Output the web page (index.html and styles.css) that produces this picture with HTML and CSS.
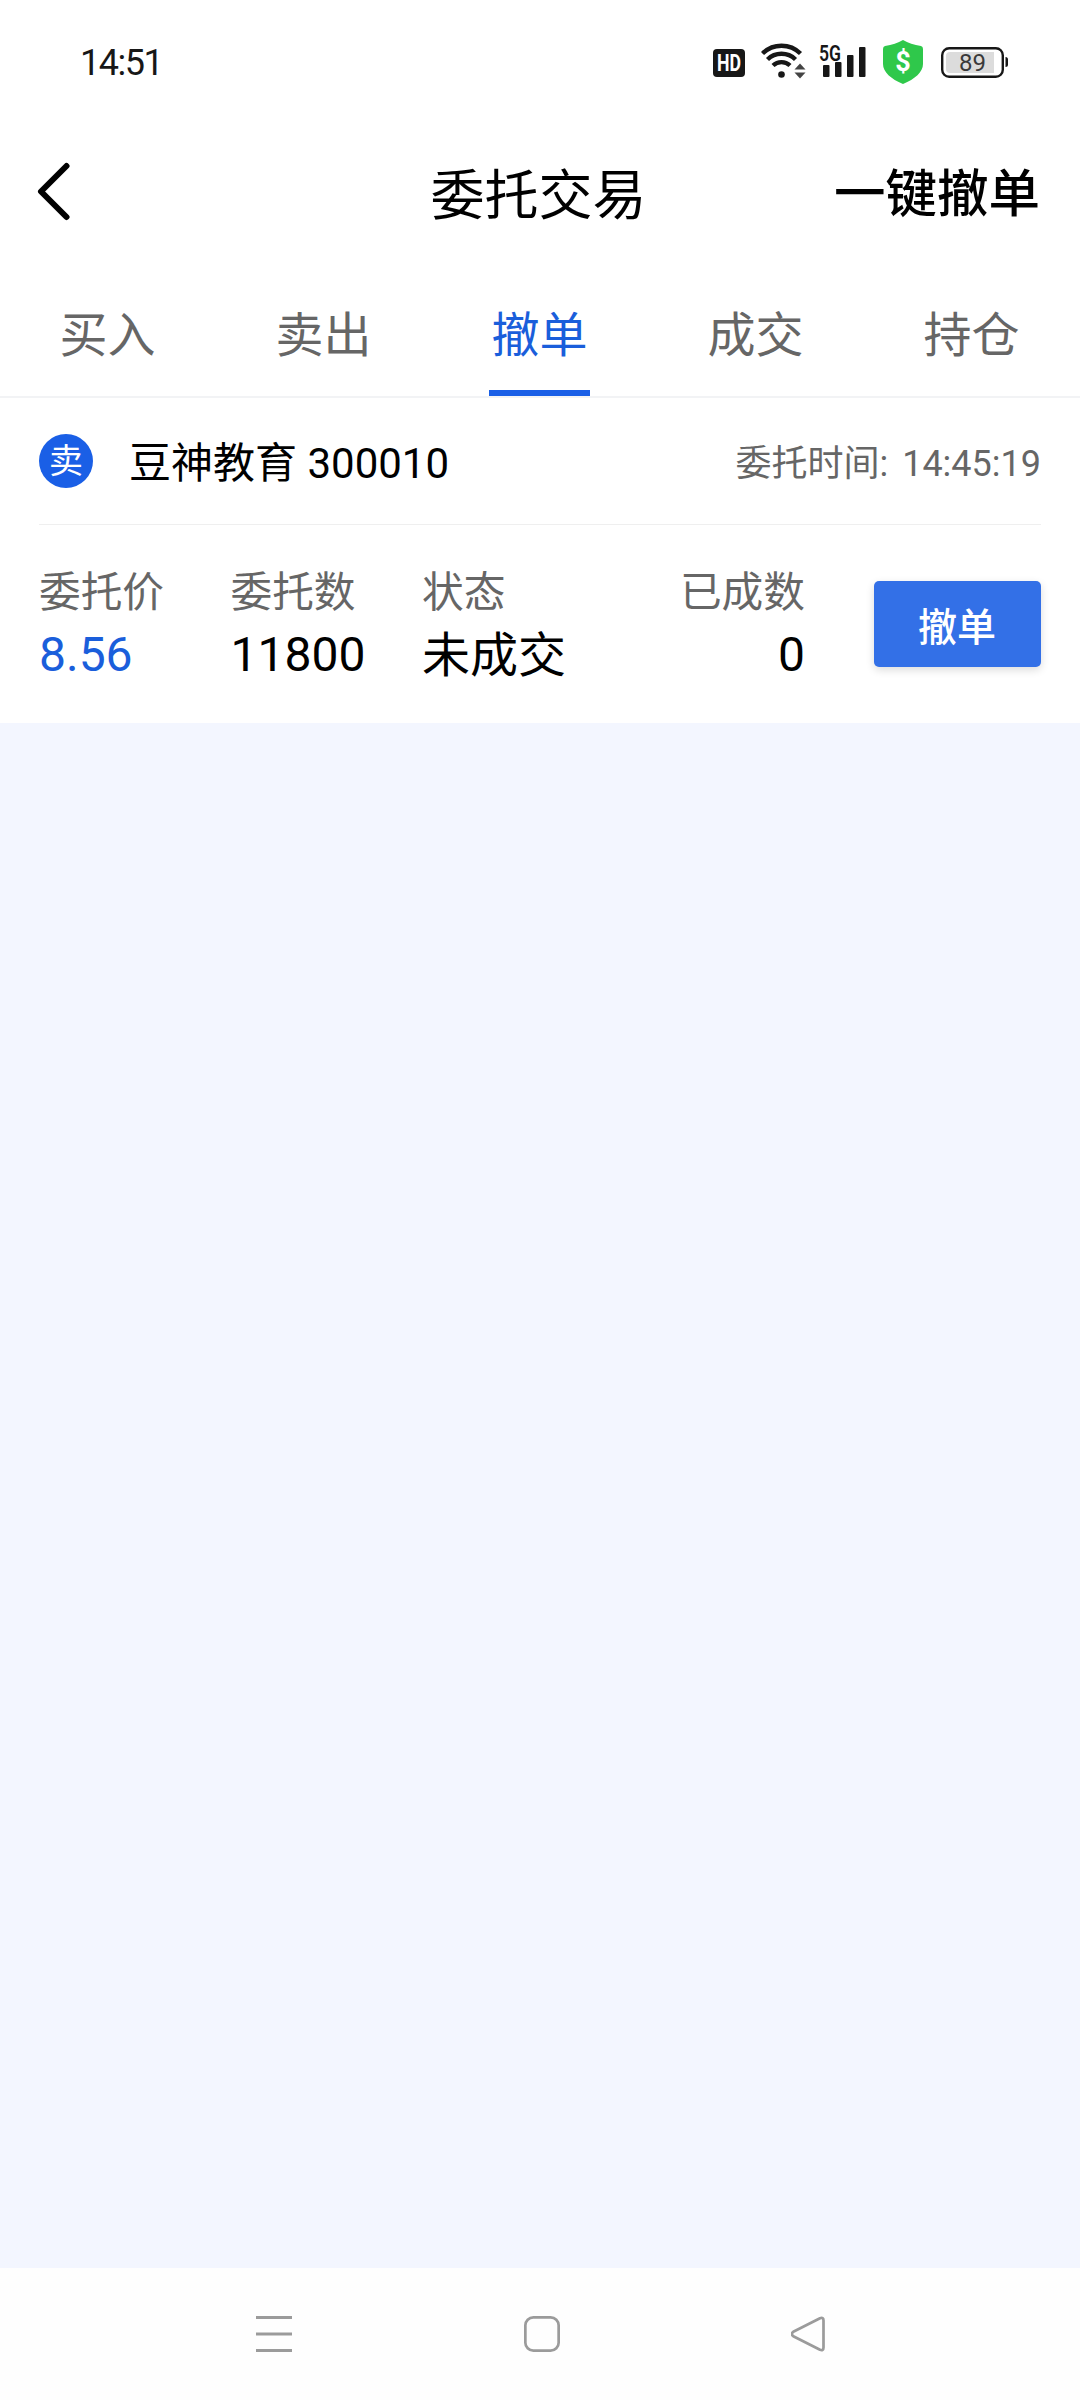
FILE: index.html
```html
<!DOCTYPE html>
<html lang="zh-CN">

<head>
    <meta charset="UTF-8">
    <meta name="viewport" content="width=device-width, initial-scale=1.0">
    <title>委托交易</title>
    <link rel="stylesheet" href="styles.css">
</head>

<body>
    <div class="status-bar">
        <span class="clock">14:51</span>
        <div class="status-icons">
            <svg class="icon-hd" width="42" height="48" viewBox="0 0 42 48">
                <rect x="0" y="11" width="32" height="28" rx="4" fill="#171717" />
                <text x="4" y="33" textLength="24" lengthAdjust="spacingAndGlyphs" font-size="23" font-weight="700" fill="#fff">HD</text>
            </svg>
            <svg class="icon-wifi" width="45" height="48" viewBox="0 0 45 48">
                <g fill="none" stroke="#171717" stroke-width="4.4">
                    <path d="M1.5 15.5a27 27 0 0 1 38 0" />
                    <path d="M6.5 21.5a20 20 0 0 1 28 0" />
                    <path d="M12 27.5a12.5 12.5 0 0 1 17 0" />
                </g>
                <circle cx="20.5" cy="36.5" r="3.3" fill="#171717" />
                <path d="M33.5 31.5l5.5-6 5.5 6z" fill="#444" />
                <path d="M33.5 34.5l5.5 6 5.5-6z" fill="#444" />
            </svg>
            <svg class="icon-signal" width="47" height="48" viewBox="0 0 47 48" fill="#171717">
                <text x="0" y="22.5" textLength="22" lengthAdjust="spacingAndGlyphs" font-size="22" font-weight="600">5G</text>
                <rect x="4" y="27" width="6.5" height="12" rx="1" />
                <rect x="16" y="24" width="6.5" height="15" rx="1" />
                <rect x="28" y="17" width="6.5" height="22" rx="1" />
                <rect x="40" y="9" width="6.5" height="30" rx="1" />
            </svg>
            <svg class="icon-shield" width="40" height="48" viewBox="0 0 40 48">
                <path d="M20 2c5 3 11 5 18 6q2 .5 2 3v15c0 8-8 15-20 20C8 41 0 34 0 26V11q0-2.5 2-3c7-1 13-3 18-6z" fill="#2fc84b" />
                <text x="20" y="33" text-anchor="middle" font-size="27" font-weight="700" fill="#fff">$</text>
            </svg>
            <svg class="icon-battery" width="68" height="48" viewBox="0 0 68 48">
                <rect x="1.2" y="10.2" width="60.6" height="28.6" rx="7" fill="#fff" stroke="#171717" stroke-width="2.4" />
                <path d="M53 14H9a4 4 0 0 0-4 4v13a4 4 0 0 0 4 4h44z" fill="#dcdcdc" />
                <path d="M64.5 19a2.5 2.5 0 0 1 2.5 2.500v5a2.500 2.500 0 0 1-2.5 2.500z" fill="#171717" />
                <text x="31.5" y="33" text-anchor="middle" font-size="24" fill="#3a3a3a">89</text>
            </svg>
        </div>
    </div>

    <div class="header">
        <svg class="back" width="34" height="60" viewBox="0 0 34 60">
            <path d="M29.5 4L4 29.5L29.5 55" fill="none" stroke="#000" stroke-width="6" stroke-linecap="round" stroke-linejoin="round" />
        </svg>
        <h1 class="title">委托交易</h1>
        <span class="cancel-all">一键撤单</span>
    </div>

    <ul class="tabs">
        <li class="tab">买入</li>
        <li class="tab">卖出</li>
        <li class="tab active">撤单</li>
        <li class="tab">成交</li>
        <li class="tab">持仓</li>
    </ul>

    <div class="order">
        <div class="order-head">
            <span class="side">卖</span>
            <span class="stock">豆神教育 300010</span>
            <span class="time">委托时间:<span class="time-value">14:45:19</span></span>
        </div>
        <div class="order-body">
            <div class="field">
                <div class="label">委托价</div>
                <div class="value price">8.56</div>
            </div>
            <div class="field">
                <div class="label">委托数</div>
                <div class="value">11800</div>
            </div>
            <div class="field">
                <div class="label">状态</div>
                <div class="value state">未成交</div>
            </div>
            <div class="field right">
                <div class="label">已成数</div>
                <div class="value">0</div>
            </div>
            <button class="cancel">撤单</button>
        </div>
    </div>

    <div class="content"></div>

    <div class="nav-bar">
        <svg width="36" height="36" viewBox="0 0 36 36" fill="none" stroke="#9b9b9b" stroke-width="3">
            <path d="M0 1.5h36M0 18h36M0 34.5h36" />
        </svg>
        <svg width="36" height="36" viewBox="0 0 36 36" fill="none" stroke="#9b9b9b" stroke-width="2.7">
            <rect x="1.35" y="1.35" width="33.3" height="33.3" rx="8" />
        </svg>
        <svg width="36" height="36" viewBox="0 0 36 36" fill="none" stroke="#9b9b9b" stroke-width="2.7" stroke-linejoin="round">
            <path d="M29 2.2L2.3 15.8Q-.5 18 2.3 20.2L29 33.8Q32.5 35 32.5 31.5V4.5Q32.5 1 29 2.2z" />
        </svg>
    </div>
</body>

</html>
```

FILE: styles.css
```css
* {
    box-sizing: border-box;
}

body {
    margin: 0;
    height: 2400px;
    display: flex;
    flex-direction: column;
    background: #fff;
    color: #000;
    font-family: Roboto, "Noto Sans CJK SC", sans-serif;
}

.status-bar {
    height: 124px;
    padding: 0 71px 0 80px;
    display: flex;
    justify-content: space-between;
    align-items: center;
}

.clock {
    padding-top: 2px;
    font-size: 36px;
    letter-spacing: -1.5px;
    color: #171717;
}

.status-icons {
    display: flex;
}

.icon-wifi {
    margin-left: 6px;
}

.icon-signal {
    margin-left: 13px;
}

.icon-shield {
    margin-left: 17px;
}

.icon-battery {
    margin-left: 18px;
}

.header {
    height: 136px;
    padding: 0 40px 0 37px;
    display: grid;
    grid-template-columns: 1fr auto 1fr;
    align-items: center;
}

.title {
    margin: 0;
    padding-top: 9px;
    font-size: 54px;
    font-weight: 400;
    line-height: 80px;
}

.cancel-all {
    justify-self: end;
    padding-top: 6px;
    font-size: 51.5px;
    font-weight: 500;
    line-height: 76px;
}

.tabs {
    height: 138px;
    margin: 0;
    padding: 0;
    display: flex;
    list-style: none;
    border-bottom: 2px solid #f2f3f5;
}

.tab {
    flex: 1;
    display: flex;
    flex-direction: column;
    align-items: center;
    justify-content: space-between;
    padding: 41px 1px 0 0;
    font-size: 48px;
    line-height: 70px;
    color: #666;
}

.tab.active {
    color: #1a5edb;
}

.tab.active::after {
    content: "";
    width: 101px;
    height: 6px;
    background: #1a5fe6;
}

.order {
    height: 325px;
    padding: 0 39px;
}

.order-head {
    height: 127px;
    display: flex;
    align-items: center;
    border-bottom: 1px solid #efefef;
}

.side {
    width: 54px;
    height: 54px;
    border-radius: 50%;
    background: #1a5fe6;
    color: #fff;
    font-size: 34px;
    line-height: 54px;
    text-align: center;
}

.stock {
    margin-left: 36px;
    padding-bottom: 4px;
    font-size: 42px;
}

.time {
    margin-left: auto;
    padding-bottom: 2px;
    font-size: 36px;
    color: #666;
}

.time-value {
    margin-left: 14px;
}

.order-body {
    display: flex;
    padding-top: 38px;
}

.field {
    width: 191.5px;
}

.field.right {
    text-align: right;
}

.label {
    font-size: 41.7px;
    line-height: 60px;
    color: #666;
}

.value {
    font-size: 48px;
    line-height: 64px;
}

.state {
    padding-top: 1px;
}

.price {
    color: #1a5edb;
}

.cancel {
    width: 167px;
    height: 86px;
    margin: 18px 0 0 auto;
    padding: 0 1px 0 0;
    border: none;
    border-radius: 5px;
    background: #3370e7;
    box-shadow: 0 3px 8px rgba(0, 0, 0, 0.14);
    color: #fff;
    font-family: inherit;
    font-size: 39px;
    font-weight: 500;
}

.content {
    flex: 1;
    background: #f3f6ff;
}

.nav-bar {
    height: 132px;
    padding: 0 253px 0 256px;
    display: flex;
    justify-content: space-between;
    align-items: center;
    background: #fefefe;
}
```
